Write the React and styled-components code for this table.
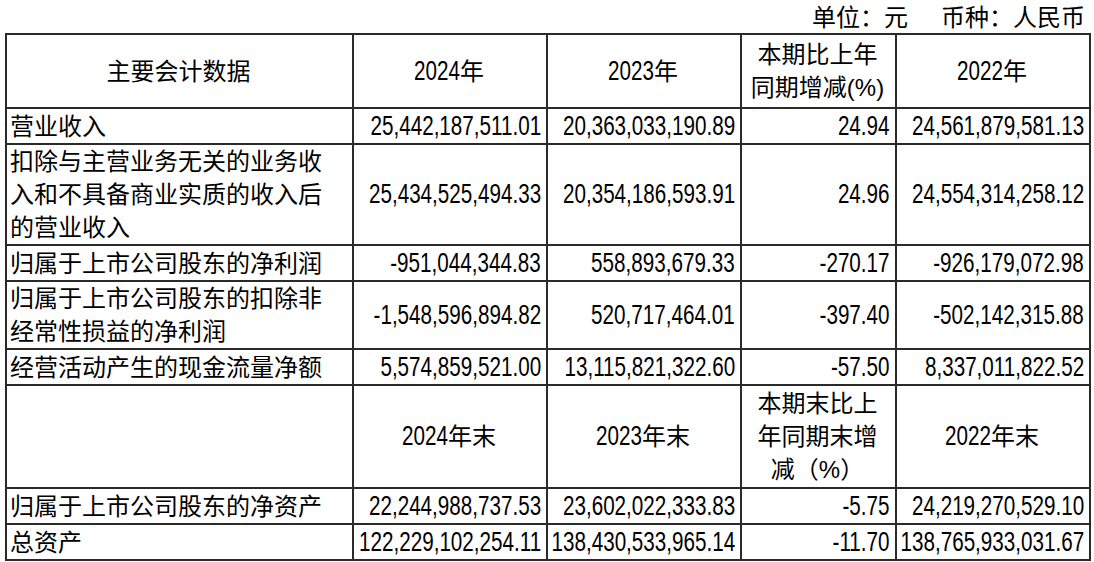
import React from 'react'
import styled, { createGlobalStyle } from 'styled-components'

const GlobalStyle = createGlobalStyle`
  body {
    margin: 0;
    background: #fff;
    color: #000;
    font-family: "Liberation Sans", "Noto Sans CJK SC", sans-serif;
  }
`

const rows = [
  { label: ['营业收入'], values: ['25,442,187,511.01', '20,363,033,190.89', '24.94', '24,561,879,581.13'], h: 36 },
  {
    label: ['扣除与主营业务无关的业务收', '入和不具备商业实质的收入后', '的营业收入'],
    values: ['25,434,525,494.33', '20,354,186,593.91', '24.96', '24,554,314,258.12'],
    h: 101
  },
  { label: ['归属于上市公司股东的净利润'], values: ['-951,044,344.83', '558,893,679.33', '-270.17', '-926,179,072.98'], h: 36 },
  {
    label: ['归属于上市公司股东的扣除非', '经常性损益的净利润'],
    values: ['-1,548,596,894.82', '520,717,464.01', '-397.40', '-502,142,315.88'],
    h: 68
  },
  { label: ['经营活动产生的现金流量净额'], values: ['5,574,859,521.00', '13,115,821,322.60', '-57.50', '8,337,011,822.52'], h: 36 }
]

const balanceRows = [
  { label: ['归属于上市公司股东的净资产'], values: ['22,244,988,737.53', '23,602,022,333.83', '-5.75', '24,219,270,529.10'], h: 36 },
  { label: ['总资产'], values: ['122,229,102,254.11', '138,430,533,965.14', '-11.70', '138,765,933,031.67'], h: 36 }
]

const lines = arr =>
  arr.map((t, i) => (
    <React.Fragment key={i}>
      {i > 0 && <br />}
      {t}
    </React.Fragment>
  ))

// year heading like 2024年 / 2024年末, digits set narrow
const Year = ({ y, suffix }) => (
  <YearWrap>
    <Fig $tight>{y}</Fig>
    {suffix}
  </YearWrap>
)

const DataRow = ({ r }) => (
  <Row $h={r.h}>
    <Label>{lines(r.label)}</Label>
    {r.values.map((v, j) => (
      <Num key={j}>
        <NumWrap>
          <Fig>{v}</Fig>
        </NumWrap>
      </Num>
    ))}
  </Row>
)

export default function App() {
  return (
    <Page>
      <GlobalStyle />
      <Unit>
        <span>单位：元</span>
        <span>币种：人民币</span>
      </Unit>
      <Table>
        <colgroup>
          <col style={{ width: 347 }} />
          <col style={{ width: 194 }} />
          <col style={{ width: 194 }} />
          <col style={{ width: 155 }} />
          <col style={{ width: 194 }} />
        </colgroup>
        <tbody>
          <Row $h={74}>
            <Head>主要会计数据</Head>
            <Head><Year y="2024" suffix="年" /></Head>
            <Head><Year y="2023" suffix="年" /></Head>
            <Head>{lines(['本期比上年', '同期增减(%)'])}</Head>
            <Head><Year y="2022" suffix="年" /></Head>
          </Row>
          {rows.map((r, i) => (
            <DataRow key={i} r={r} />
          ))}
          <Row $h={103}>
            <Head />
            <Head><Year y="2024" suffix="年末" /></Head>
            <Head><Year y="2023" suffix="年末" /></Head>
            <Head>{lines(['本期末比上', '年同期末增', '减（%）'])}</Head>
            <Head><Year y="2022" suffix="年末" /></Head>
          </Row>
          {balanceRows.map((r, i) => (
            <DataRow key={i} r={r} />
          ))}
        </tbody>
      </Table>
    </Page>
  )
}

const Page = styled.div`
  width: 1094px;
  height: 562px;
  overflow: hidden;
`

const Unit = styled.div`
  display: flex;
  justify-content: flex-end;
  gap: 33px;
  height: 33px;
  padding-right: 9px;
  font-size: 24px;
  line-height: 36px;
`

const Table = styled.table`
  margin-left: 5px;
  width: 1086px;
  table-layout: fixed;
  border-collapse: collapse;
  font-size: 24px;
  line-height: 33px;
`

const Row = styled.tr`
  height: ${p => p.$h}px;
`

const Cell = styled.td`
  border: 2px solid #2a2a2a;
  padding: 0 5px 0 3px;
  vertical-align: middle;
  white-space: nowrap;
`

const Head = styled(Cell)`
  text-align: center;
`

const Label = styled(Cell)`
  text-align: left;
`

const Num = styled(Cell)`
  text-align: right;
`

const NumWrap = styled.div`
  display: flex;
  justify-content: flex-end;
`

const YearWrap = styled.span`
  display: inline-flex;
  align-items: baseline;
`

// condensed figures, like the narrow face of the printed report
const Fig = styled.span`
  display: inline-block;
  font-size: 27px;
  line-height: 33px;
  transform: scaleX(0.765);
  transform-origin: right center;
  margin-left: ${p => (p.$tight ? '-14px' : '0')};
`
